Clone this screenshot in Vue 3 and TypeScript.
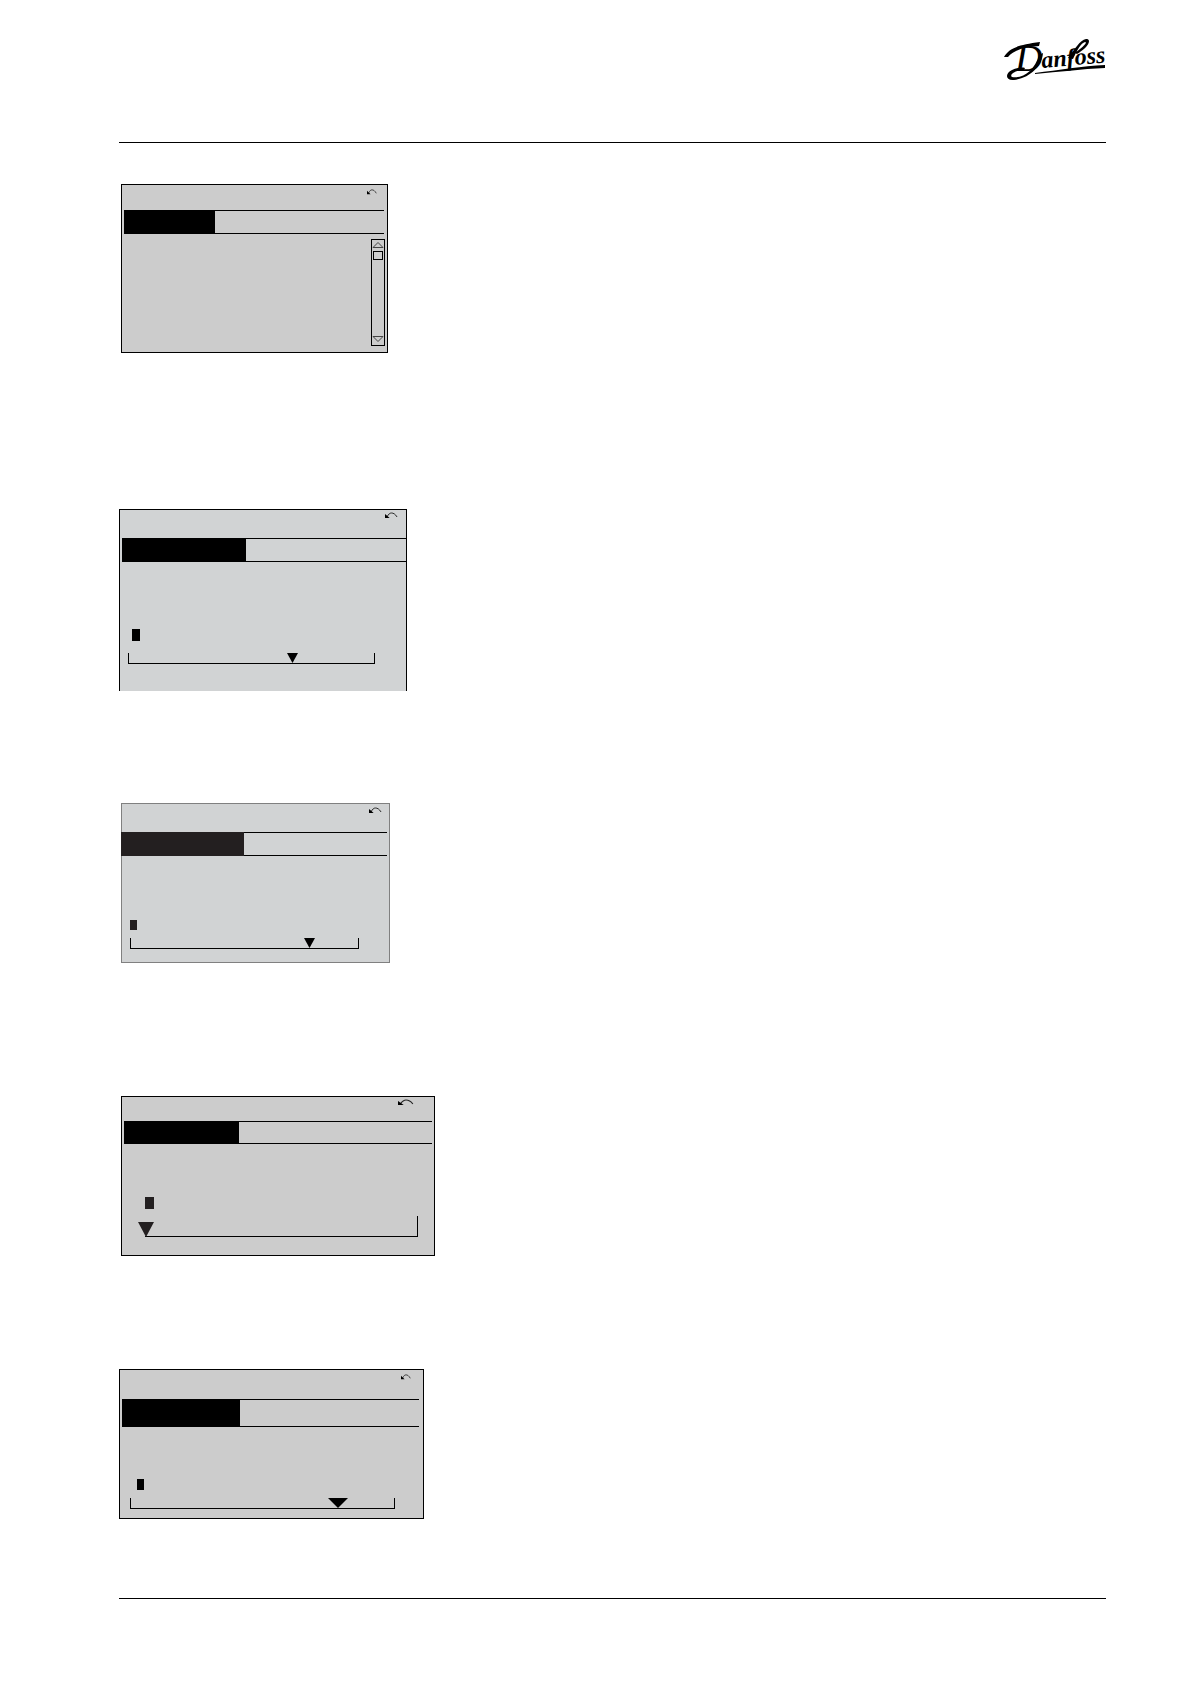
<script setup lang="ts">
interface Screen {
  id: string
  list: boolean
  arrow: string
}

const screens: Screen[] = [
  { id: 'list', list: true, arrow: 'small' },
  { id: 'open', list: false, arrow: 'medium' },
  { id: 'soft', list: false, arrow: 'medium' },
  { id: 'wide', list: false, arrow: 'large' },
  { id: 'last', list: false, arrow: 'small' },
]
</script>

<template>
  <div class="page">
    <header class="page-header">
      <svg class="logo" viewBox="0 0 102 46" role="img" aria-label="Danfoss">
        <text x="11" y="34" class="logo-text logo-initial">D</text>
        <text x="38" y="31" class="logo-text" transform="rotate(-5 38 31)">anfoss</text>
        <path d="M0 20C5 11 14 8 36 5L35 9C20 10 10 13 4 20Z" />
        <path d="M39 16C38 29 26 41 10 43C1 44 1 36 8 33C12 31 17 30 21 31L20 33C11 33 5 38 8 40C19 42 31 33 35 18Z" />
        <path d="M64 21C70 13 76 3 82 2C88 2 85 10 73 17L71 16C79 10 84 5 81 5C77 6 73 13 69 22Z" />
        <path d="M31 36C55 33 78 29 101 28V31C77 32 55 35 31 37Z" />
      </svg>
    </header>

    <main class="screens">
      <section v-for="s in screens" :key="s.id" class="screen" :class="s.id">
        <div class="title">
          <svg class="arrow" :class="s.arrow" viewBox="0 0 14 7" preserveAspectRatio="none" aria-hidden="true">
            <path d="M2 5C4 2 5 1 7 1S11 2 13 5" class="arc" />
            <path d="M0 2L5 6H0Z" />
          </svg>
        </div>
        <div class="band"><div class="selected"></div></div>
        <div v-if="s.list" class="list-area">
          <div class="scrollbar">
            <svg class="chevron" viewBox="0 0 10 6" aria-hidden="true"><path d="M0 5.5L5 0.5L10 5.5Z" /></svg>
            <div class="thumb"></div>
            <svg class="chevron down" viewBox="0 0 10 6" aria-hidden="true"><path d="M0 0.5H10L5 5.5Z" /></svg>
          </div>
        </div>
        <template v-else>
          <div class="cursor"></div>
          <div class="scale">
            <svg class="pointer" viewBox="0 0 10 10" preserveAspectRatio="none" aria-hidden="true">
              <path d="M0 0H10L5 10Z" />
            </svg>
          </div>
        </template>
      </section>
    </main>
    <footer class="page-footer"></footer>
  </div>
</template>

<style>
body {
  margin: 0;
  background: #fff;
}
</style>

<style scoped>
.page {
  box-sizing: border-box;
  padding: 0 85px 85px 119px;
  font-family: "Liberation Serif", serif;
}
.page * {
  box-sizing: border-box;
}
.page-header {
  display: flex;
  justify-content: flex-end;
  height: 143px;
  padding-top: 37px;
  border-bottom: 1px solid #000;
}
.logo {
  width: 102px;
  height: 46px;
  overflow: visible;
}
.logo-text {
  font: italic bold 24px "Liberation Serif", serif;
}
.logo-initial {
  font-size: 38px;
  font-weight: normal;
}
.page-footer {
  margin-top: 79px;
  border-top: 1px solid #000;
}
.screens {
  display: flex;
  flex-direction: column;
  align-items: flex-start;
  padding-top: 41px;
}
.screen {
  --ink: #000;
  display: flex;
  flex-direction: column;
  background: #ccc;
  border: 1px solid #000;
}
.title {
  display: flex;
  flex: none;
  justify-content: flex-end;
}
.arrow {
  display: block;
}
.arrow.small {
  width: 10px;
  height: 6px;
}
.arrow.medium {
  width: 13px;
  height: 7px;
}
.arrow.large {
  width: 16px;
  height: 7px;
}
.arc {
  fill: none;
  stroke: #222;
}
.band {
  flex: none;
  height: 24px;
  border: solid #000;
  border-width: 1px 0;
}
.selected {
  height: 100%;
  background: var(--ink);
  outline: 1px solid var(--ink);
  clip-path: inset(-1px 0);
}
.cursor {
  flex: none;
  background: var(--ink);
}
.scale {
  position: relative;
  flex: none;
  height: 11px;
  border: 1px solid #000;
  border-top: 0;
}
.pointer {
  position: absolute;
  width: 11px;
  height: 10px;
  fill: var(--ink);
}

.list {
  width: 267px;
  height: 169px;
}
.list .title {
  height: 25px;
  padding: 4px 10px 0 0;
}
.list .band {
  margin: 0 3px 0 2px;
}
.list .selected {
  width: 91px;
}
.list-area {
  display: flex;
  flex: 1;
  justify-content: flex-end;
  padding: 5px 2px 6px 0;
}
.scrollbar {
  display: flex;
  flex-direction: column;
  align-items: center;
  width: 14px;
  border: 1px solid #000;
}
.chevron {
  flex: none;
  width: 10px;
  height: 6px;
  margin: 2px 0 3px;
  fill: none;
  stroke: #444;
  overflow: visible;
}
.chevron.down {
  margin-top: auto;
}
.thumb {
  width: 10px;
  height: 9px;
  border: 1px solid #000;
}

.open {
  width: 288px;
  height: 182px;
  margin-top: 156px;
  background: #d1d3d4;
  border-bottom: 0;
}
.open .title {
  height: 28px;
  padding: 2px 8px 0 0;
}
.open .band {
  margin-left: 2px;
}
.open .selected {
  width: 124px;
}
.open .cursor {
  width: 8px;
  height: 12px;
  margin: 67px 0 12px 12px;
}
.open .scale {
  width: 247px;
  margin-left: 8px;
}
.open .pointer {
  left: 158px;
  top: 0;
}

.soft {
  --ink: #231f20;
  width: 269px;
  height: 160px;
  margin-top: 112px;
  background: #d1d3d4;
  border-color: #808080;
}
.soft .title {
  height: 28px;
  padding: 3px 7px 0 0;
}
.soft .band {
  margin: 0 2px 0 -1px;
}
.soft .selected {
  width: 123px;
}
.soft .cursor {
  width: 7px;
  height: 10px;
  margin: 64px 0 8px 8px;
}
.soft .scale {
  width: 229px;
  margin-left: 8px;
}
.soft .pointer {
  left: 173px;
  top: 0;
  fill: #000;
}

.wide {
  --ink: #231f20;
  width: 314px;
  height: 160px;
  margin-top: 133px;
}
.wide .title {
  height: 24px;
  padding: 2px 20px 0 0;
}
.wide .band {
  height: 23px;
  margin: 0 2px;
}
.wide .selected {
  width: 115px;
  background: #000;
  outline-color: #000;
}
.wide .cursor {
  width: 9px;
  height: 12px;
  margin: 53px 0 7px 23px;
}
.wide .scale {
  width: 273px;
  height: 21px;
  margin-left: 23px;
  border-left: 0;
}
.wide .pointer {
  left: -7px;
  top: 6px;
  width: 16px;
  height: 15px;
}

.last {
  width: 305px;
  height: 150px;
  margin-top: 113px;
}
.last .title {
  height: 29px;
  padding: 4px 12px 0 0;
}
.last .band {
  height: 28px;
  margin: 0 4px 0 2px;
}
.last .selected {
  width: 118px;
}
.last .cursor {
  width: 7px;
  height: 11px;
  margin: 52px 0 8px 17px;
}
.last .scale {
  width: 265px;
  margin-left: 10px;
}
.last .pointer {
  left: 197px;
  top: 0;
  width: 20px;
}

.list,
.soft,
.wide {
  margin-left: 2px;
}
</style>
